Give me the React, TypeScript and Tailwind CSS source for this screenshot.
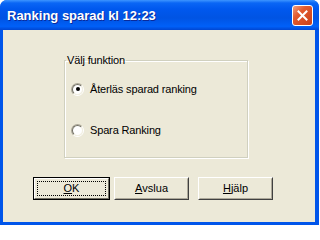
import React from 'react';

const ui = { fontFamily: '"Liberation Sans", Arial, sans-serif' };

function Radio({ checked }: { checked?: boolean }) {
    return (
        <span className="size-[13px] rounded-full border border-t-[#ACA899] border-l-[#ACA899] border-b-white border-r-white grid place-items-center shrink-0">
            <span className="size-[11px] rounded-full border border-t-[#716F64] border-l-[#716F64] border-b-[#F1EFE2] border-r-[#F1EFE2] bg-white grid place-items-center">
                {checked && <span className="size-[4px] rounded-full bg-black" />}
            </span>
        </span>
    );
}

function Button({ children, isDefault }: { children: React.ReactNode; isDefault?: boolean }) {
    if (isDefault) {
        return (
            <div className="w-[77px] h-[23px] border border-black">
                <div className="h-full border border-t-white border-l-white border-b-[#716F64] border-r-[#716F64] bg-[#ECE9D8] p-[2px]">
                    <div className="h-full border border-dotted border-black flex items-center justify-center text-[11px] text-black">
                        {children}
                    </div>
                </div>
            </div>
        );
    }
    return (
        <div className="w-[75px] h-[23px] border border-t-white border-l-white border-b-[#404040] border-r-[#404040]">
            <div className="h-full border border-t-[#ECE9D8] border-l-[#ECE9D8] border-b-[#ACA899] border-r-[#ACA899] bg-[#ECE9D8] flex items-center justify-center text-[11px] text-black">
                {children}
            </div>
        </div>
    );
}

export default function App() {
    return (
        <div className="w-[319px] h-[225px] bg-white" style={ui}>
            <div className="w-full h-full flex flex-col rounded-t-[7px] bg-[#0055EA] overflow-hidden">
                {/* Titelrad */}
                <div className="h-[30px] shrink-0 flex items-center justify-between pl-[7px] pr-[6px] bg-[linear-gradient(to_bottom,#3D95FF_0%,#0A66F5_10%,#0058EE_30%,#0054E3_60%,#0060F8_88%,#0046D2_100%)]">
                    <span className="text-[13px] font-bold text-white leading-none [text-shadow:1px_1px_0_#0A2A9A] pt-[1px]">
                        Ranking sparad kl 12:23
                    </span>
                    <div className="size-[21px] rounded-[3px] border border-white bg-[linear-gradient(to_bottom_right,#F0A080_0%,#E35A2E_35%,#C8401A_100%)] grid place-items-center">
                        <svg width="11" height="11" viewBox="0 0 11 11">
                            <path d="M1.5 1.5 L9.5 9.5 M9.5 1.5 L1.5 9.5" stroke="white" strokeWidth="2" strokeLinecap="square" />
                        </svg>
                    </div>
                </div>

                {/* Innehåll */}
                <div className="flex-1 ml-[3px] mr-[4px] mb-[3px] bg-[#ECE9D8] flex flex-col">
                    <fieldset className="ml-[61px] mt-[24px] w-[184px] h-[104px] border border-[#D0D0BF] shadow-[inset_1px_1px_0_#fff,1px_1px_0_#fff]">
                        <legend className="ml-[1px] px-[1px] text-[11px] leading-[13px] text-black tracking-[-0.15px]">Välj funktion</legend>
                        <div className="flex flex-col pl-[6px]">
                            <label className="mt-[14px] h-[16px] flex items-center gap-[6px] text-[11px] text-black tracking-[-0.15px]">
                                <Radio checked />
                                Återläs sparad ranking
                            </label>
                            <label className="mt-[25px] h-[16px] flex items-center gap-[6px] text-[11px] text-black tracking-[-0.15px]">
                                <Radio />
                                Spara Ranking
                            </label>
                        </div>
                    </fieldset>

                    <div className="flex mt-[19px] ml-[30px]">
                        <Button isDefault>
                            <u>O</u>K
                        </Button>
                        <div className="ml-[4px]">
                            <Button>
                                <u>A</u>vslua
                            </Button>
                        </div>
                        <div className="ml-[9px]">
                            <Button>
                                <u>H</u>jälp
                            </Button>
                        </div>
                    </div>
                </div>
            </div>
        </div>
    );
}
